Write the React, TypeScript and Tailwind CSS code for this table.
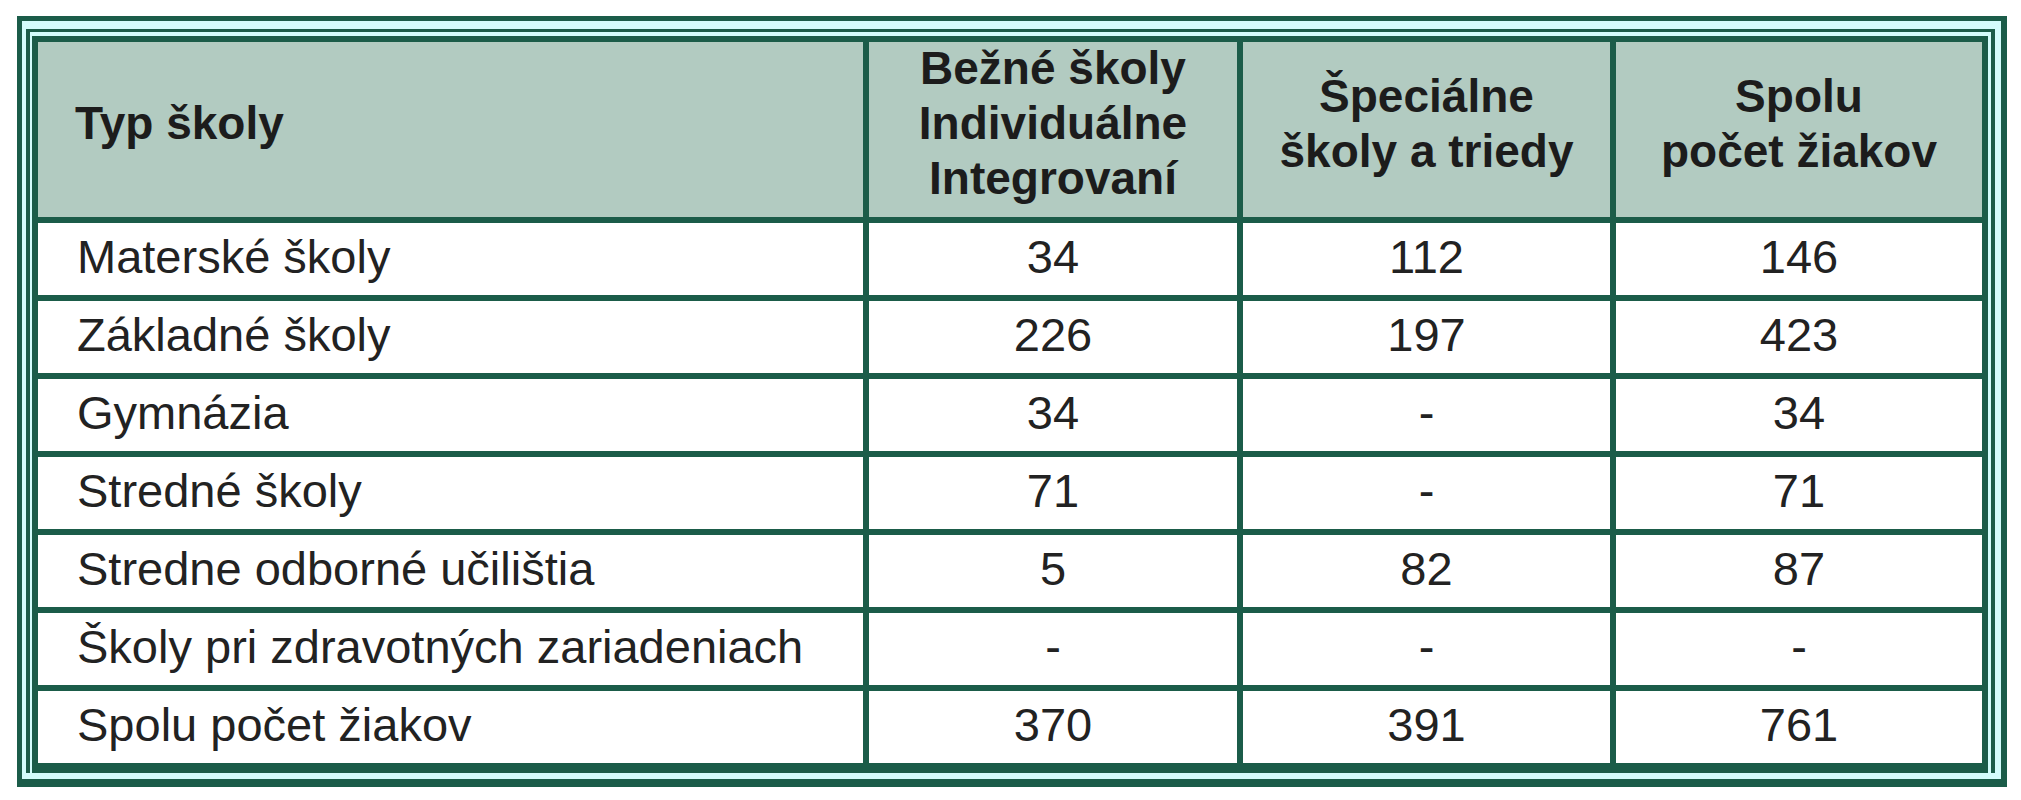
const ROWS: [string, string, string, string][] = [
  ['Materské školy', '34', '112', '146'],
  ['Základné školy', '226', '197', '423'],
  ['Gymnázia', '34', '-', '34'],
  ['Stredné školy', '71', '-', '71'],
  ['Stredne odborné učilištia', '5', '82', '87'],
  ['Školy pri zdravotných zariadeniach', '-', '-', '-'],
  ['Spolu počet žiakov', '370', '391', '761'],
];

export default function App() {
  return (
    <div className="min-h-screen bg-white pt-4 pl-[17px] font-['Liberation_Sans',Arial,sans-serif]">
      {/* outer frame */}
      <div className="w-[1990px] border-[5px] border-r-[6px] border-b-[8px] border-[#1b5c49] bg-[#d4fcfc] pt-2 pl-1 pr-[6px] pb-[6px]">
        {/* inner frame */}
        <div className="border-4 border-t-[3px] border-b-0 border-[#1b5c49] pt-1 pl-[2px] pr-[3px]">
          <div className="grid grid-cols-[825px_368px_367px_366px] gap-[6px] bg-[#1b5c49] pt-[6px] pl-[6px] pr-[6px] pb-[10px]">
            {/* header */}
            <div className="h-[175px] bg-[#b2cbc1] flex items-center pb-3 pl-[37px] text-[46px] leading-[55px] font-bold text-[#1c1c1c]">
              Typ školy
            </div>
            <div className="h-[175px] bg-[#b2cbc1] flex items-center justify-center pb-3 text-center text-[46px] leading-[55px] font-bold text-[#1c1c1c]">
              <div>
                Bežné školy
                <br />
                Individuálne
                <br />
                Integrovaní
              </div>
            </div>
            <div className="h-[175px] bg-[#b2cbc1] flex items-center justify-center pb-3 text-center text-[46px] leading-[55px] font-bold text-[#1c1c1c]">
              <div>
                Špeciálne
                <br />
                školy a triedy
              </div>
            </div>
            <div className="h-[175px] bg-[#b2cbc1] flex items-center justify-center pb-3 text-center text-[46px] leading-[55px] font-bold text-[#1c1c1c]">
              <div>
                Spolu
                <br />
                počet žiakov
              </div>
            </div>

            {/* body */}
            {ROWS.map((row) =>
              row.map((cell, i) => (
                <div
                  key={row[0] + i}
                  className={`h-[72px] bg-white flex items-center pb-[6px] text-[47px] leading-[55px] text-[#222] ${
                    i === 0 ? 'pl-[39px] whitespace-nowrap' : 'justify-center'
                  }`}
                >
                  {cell}
                </div>
              ))
            )}
          </div>
        </div>
      </div>
    </div>
  );
}
